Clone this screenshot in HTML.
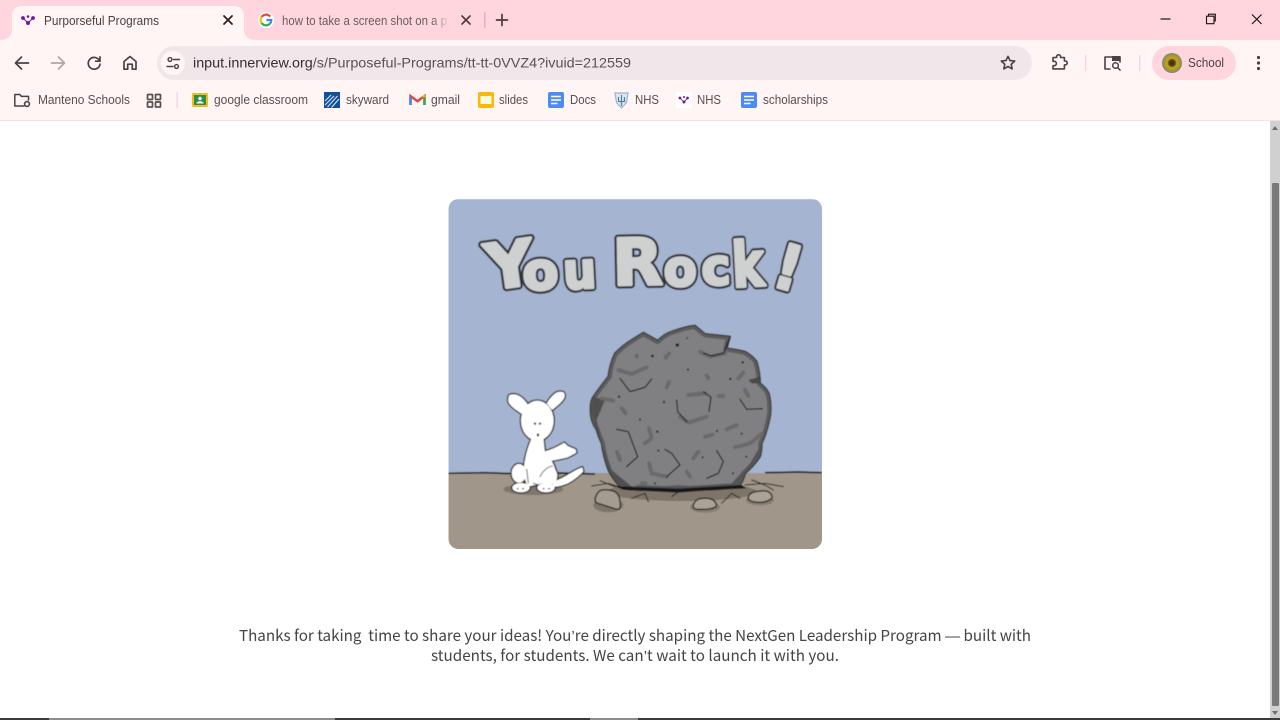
<!DOCTYPE html>
<html lang="en"><head><meta charset="utf-8"><title>Purporseful Programs</title>
<style>
html,body{margin:0;padding:0;width:1280px;height:720px;overflow:hidden;background:#fff}
svg{display:block}
text{font-family:"Liberation Sans",sans-serif;white-space:pre}
.b{font-size:12.5px;fill:#5a4e50}
.ic{fill:none;stroke:#4f3f43;stroke-width:1.7;stroke-linecap:round;stroke-linejoin:round}
.body{font-family:"Noto Sans CJK SC","Liberation Sans",sans-serif;font-size:15.2px;fill:#444}
.body tspan{font-family:"Liberation Sans",sans-serif}
.ttl text{font-family:"DejaVu Sans",sans-serif;font-weight:bold;stroke-linejoin:round}
.t1 text{fill:#2e323a;stroke:#2e323a;stroke-width:7.5}
.t2 text{fill:#cfd1d0;stroke:#cfd1d0;stroke-width:3}
</style></head><body>
<svg width="1280" height="720" viewBox="0 0 1280 720" xmlns="http://www.w3.org/2000/svg" xmlns:xlink="http://www.w3.org/1999/xlink">
<defs>
<clipPath id="card"><rect x="448.5" y="199" width="373.5" height="350" rx="10"/></clipPath>
<linearGradient id="fade" x1="0" x2="1"><stop offset="0" stop-color="#ffd6de" stop-opacity="0"/><stop offset="1" stop-color="#ffd6de"/></linearGradient>
<filter id="soft" x="-5%" y="-5%" width="110%" height="110%"><feGaussianBlur stdDeviation="0.45"/></filter>
<radialGradient id="sun"><stop offset="0" stop-color="#3d2a10"/><stop offset=".3" stop-color="#5a4012"/><stop offset=".48" stop-color="#c9a51c"/><stop offset=".78" stop-color="#a2992a"/><stop offset="1" stop-color="#6f8a8f"/></radialGradient>
<path id="rockp" d="M175 38L218 62Q240 40 260 35Q300 20 330 17L360 42L435 50L425 85Q460 90 480 95Q505 110 515 125Q525 160 525 190Q545 205 552 222Q560 260 555 290Q545 340 530 370Q530 395 525 410Q505 440 480 460Q475 485 460 500Q370 515 280 505Q190 515 110 505Q85 480 70 450Q55 410 50 370Q40 350 35 330Q15 300 17 270Q15 245 25 230Q50 195 70 170Q75 130 90 100Q115 75 140 60Z"/>
<clipPath id="rockc"><use xlink:href="#rockp"/></clipPath>
<g id="dogs">
<path d="M192 256C208 248 225 256 236 268C246 278 250 285 250 290L235 315C215 300 185 285 190 265Z"/>
<path d="M357 248C340 238 322 252 305 280L322 300C340 285 368 265 357 248Z"/>
<ellipse cx="277" cy="332" rx="49" ry="60"/>
<path d="M262 380L295 380L300 430C325 450 335 480 335 510L250 530C228 500 235 440 262 380Z"/>
<path d="M295 425C320 420 340 408 358 398L368 408L392 418L394 428L384 434L368 442C345 448 320 452 300 456Z"/>
<path d="M320 515C355 508 385 480 412 472L415 484C395 505 365 530 325 530Z"/>
<ellipse cx="222" cy="490" rx="22" ry="28"/>
<ellipse cx="310" cy="497" rx="27" ry="28"/>
<ellipse cx="228" cy="533" rx="26" ry="14"/>
<ellipse cx="303" cy="533" rx="26" ry="14"/>
</g>
</defs>

<!-- frame -->
<rect width="1280" height="40" fill="#ffd6de"/>
<rect y="40" width="1280" height="80" fill="#fff5f5"/>
<rect y="120" width="1280" height="1" fill="#f8dde1"/>

<!-- active tab -->
<path d="M0 40 C8 40 12 36 12 30 V16 C12 10 16 6 22 6 H234 C240 6 244 10 244 16 V30 C244 36 248 40 256 40 Z" fill="#fff5f5"/>
<g fill="#6a1b9a"><circle cx="23" cy="18" r="1.9"/><circle cx="33" cy="18" r="1.9"/><circle cx="28" cy="23" r="2"/><circle cx="28" cy="16.5" r="1.3"/></g>
<path d="M23 18L28 23L33 18" fill="none" stroke="#6a1b9a" stroke-width="1"/>
<text x="44" y="25" font-size="12.5" fill="#4a3f42" textLength="115" lengthAdjust="spacingAndGlyphs">Purporseful Programs</text>
<path d="M224 16l8 8M232 16l-8 8" class="ic" style="stroke:#2c2326;stroke-width:1.8"/>

<!-- second tab -->
<circle cx="266" cy="20" r="8" fill="#fff"/>
<g fill="none" stroke-width="2.2">
<path d="M270.2 16.6A5.4 5.4 0 0 0 261.6 17" stroke="#ea4335"/>
<path d="M261.6 17A5.4 5.4 0 0 0 261.6 23" stroke="#fbbc05"/>
<path d="M261.6 23A5.4 5.4 0 0 0 270 23.6" stroke="#34a853"/>
<path d="M270 23.6A5.4 5.4 0 0 0 271.3 20H266.4" stroke="#4285f4"/>
</g>
<text x="282" y="25" font-size="12.5" fill="#6a5d60" textLength="165" lengthAdjust="spacingAndGlyphs">how to take a screen shot on a p</text>
<rect x="432" y="8" width="18" height="24" fill="url(#fade)"/>
<rect x="447" y="8" width="12" height="24" fill="#ffd6de"/>
<path d="M462 16l8 8M470 16l-8 8" class="ic" style="stroke:#4a3a3e;stroke-width:1.6"/>
<rect x="484" y="12" width="1.5" height="16" fill="#f2a9b8"/>
<path d="M502 14.5v11M496.5 20h11" class="ic" style="stroke:#4a3a3e"/>

<!-- window controls -->
<path d="M1160.5 19h10" stroke="#1c1416" stroke-width="1.2"/>
<path d="M1206.5 16.2h7.5v7.5h-7.5z" fill="none" stroke="#1c1416" stroke-width="1.1"/>
<path d="M1208.5 16v-1.800h6.800v6.800h-1.400" fill="none" stroke="#1c1416" stroke-width="1.1"/>
<path d="M1252 14.500l9.500 9.500M1261.500 14.500l-9.500 9.500" stroke="#1c1416" stroke-width="1.2" fill="none"/>

<!-- nav -->
<path d="M28.500 63H16M21.500 57L15.500 63l6 6" class="ic"/>
<path d="M51.500 63H64M58.500 57l6 6-6 6" class="ic" style="stroke:#b3a5a8"/>
<path d="M99.200 60.200A5.900 5.900 0 1 0 100 64.200" class="ic"/><path d="M100 56.800v4.400h-4.400" class="ic"/>
<path d="M124 61.500l6-5 6 5v7.700h-3.700v-5h-4.600v5H124z" class="ic"/>

<!-- omnibox -->
<rect x="157" y="46" width="875" height="34" rx="17" fill="#f1e6e9"/>
<circle cx="173" cy="63" r="12" fill="#fff5f5"/>
<circle cx="170" cy="59.500" r="1.900" class="ic" style="stroke-width:1.4"/><path d="M173.500 59.500h6M167 66.500h6" class="ic" style="stroke-width:1.4"/><circle cx="176.500" cy="66.500" r="1.900" class="ic" style="stroke-width:1.4"/>
<text x="193" y="67.500" font-size="14" fill="#3a2c30" textLength="438" lengthAdjust="spacingAndGlyphs">input.innerview.org<tspan fill="#5e5054">/s/Purposeful-Programs/tt-tt-0VVZ4?ivuid=212559</tspan></text>
<path d="M1008 56.300l2 4.300 4.700.5-3.500 3.200 1 4.600-4.200-2.400-4.200 2.400 1-4.600-3.500-3.200 4.700-.5z" class="ic" style="stroke-width:1.6"/>

<!-- toolbar right -->
<path d="M1053 57.500h3.600v-.8a2 2 0 0 1 4 0v.8h3.800v3.400h.8a2 2 0 0 1 0 4h-.8v4h-11.400v-3.200h1.200a2.100 2.100 0 0 0 0-4.400h-1.200z" class="ic" style="stroke-width:1.6"/>
<rect x="1085" y="55" width="1.400" height="16" fill="#fbd3da"/>
<path d="M1110 69h-5v-12h15v5" class="ic" style="stroke-width:1.6"/><rect x="1112" y="56" width="8.500" height="5" fill="#4f3f43"/>
<circle cx="1115.500" cy="65.500" r="2.800" class="ic" style="stroke-width:1.5"/><path d="M1117.700 67.700l2.400 2.400" class="ic" style="stroke-width:1.5"/>
<rect x="1139" y="55" width="1.400" height="16" fill="#fbd3da"/>
<rect x="1152" y="46" width="84" height="34" rx="17" fill="#ffd6de"/>
<circle cx="1172" cy="63" r="10" fill="url(#sun)"/>
<text x="1188" y="67" font-size="12.500" fill="#4e3f43" textLength="36" lengthAdjust="spacingAndGlyphs">School</text>
<g fill="#4f3f43"><circle cx="1258.500" cy="57.500" r="1.600"/><circle cx="1258.500" cy="63" r="1.600"/><circle cx="1258.500" cy="68.500" r="1.600"/></g>

<!-- bookmarks -->
<path d="M24 106h-9.200v-11.500h5l1.700 1.900h7v3.600" class="ic" style="stroke-width:1.5"/>
<circle cx="27" cy="104" r="2.400" class="ic" style="stroke-width:1.600"/>
<text class="b" x="38" y="104" textLength="92" lengthAdjust="spacingAndGlyphs">Manteno Schools</text>
<g fill="none" stroke="#5a4e50" stroke-width="1.700"><rect x="147.500" y="94.500" width="5" height="5" rx=".6"/><rect x="155.500" y="94.500" width="5" height="5" rx=".6"/><rect x="147.500" y="102" width="5" height="5" rx=".6"/><rect x="155.500" y="102" width="5" height="5" rx=".6"/></g>
<rect x="176.500" y="92" width="1.400" height="16" fill="#fbd3da"/>

<rect x="192" y="93" width="16" height="14" rx="1.200" fill="#f7bb15"/><rect x="194" y="95" width="12" height="10" fill="#2a8e4c"/><circle cx="200" cy="98.500" r="1.700" fill="#fff"/><path d="M196.500 103.500c0-3 7-3 7 0z" fill="#fff"/>
<text class="b" x="214" y="104" textLength="94" lengthAdjust="spacingAndGlyphs">google classroom</text>

<rect x="324" y="92" width="16" height="16" fill="#14509a"/><path d="M325 105l9-9M327.500 107l10-11M331.500 107.500l7.500-8.500M325 101l6-6" stroke="#cfe0f3" stroke-width="1.100" fill="none"/>
<text class="b" x="346" y="104" textLength="43" lengthAdjust="spacingAndGlyphs">skyward</text>

<path d="M410.500 105V96l7 5.200 7-5.200v9" fill="none" stroke="#ea4335" stroke-width="2.400"/><path d="M410.500 97v8" stroke="#4285f4" stroke-width="2.600"/><path d="M424.500 97v8" stroke="#34a853" stroke-width="2.600"/><path d="M423.200 95.500l1.500 1.500" stroke="#fbbc05" stroke-width="2.400"/>
<text class="b" x="431" y="104" textLength="29" lengthAdjust="spacingAndGlyphs">gmail</text>

<rect x="478" y="92" width="16" height="16" rx="2" fill="#fab908"/><rect x="480.500" y="96" width="11" height="8" fill="#fff7e0"/>
<text class="b" x="499" y="104" textLength="29" lengthAdjust="spacingAndGlyphs">slides</text>

<rect x="548" y="92" width="16" height="16" rx="2" fill="#4c8bf5"/><path d="M551 96.500h10M551 100h10M551 103.500h6.500" stroke="#fff" stroke-width="1.500"/>
<text class="b" x="570" y="104" textLength="26" lengthAdjust="spacingAndGlyphs">Docs</text>

<path d="M615 93h13l-1.500 9.500-5 5.500-5-5.500z" fill="#dfe7ee" stroke="#9eb5c9" stroke-width="1.200"/><path d="M621.500 95v11M618.500 97v4.500h6V97" stroke="#4d83ad" stroke-width="1.200" fill="none"/>
<text class="b" x="635" y="104" textLength="24" lengthAdjust="spacingAndGlyphs">NHS</text>

<rect x="676" y="92" width="16" height="16" fill="#fff"/><g fill="#6a1b9a"><circle cx="680" cy="98" r="1.400"/><circle cx="687.500" cy="98" r="1.400"/><circle cx="684" cy="102" r="1.500"/><circle cx="684" cy="97" r="1"/></g><path d="M680 98l4 4 3.500-4" fill="none" stroke="#6a1b9a" stroke-width=".8"/>
<text class="b" x="697" y="104" textLength="24" lengthAdjust="spacingAndGlyphs">NHS</text>

<rect x="741" y="92" width="16" height="16" rx="2" fill="#4c8bf5"/><path d="M744 96.500h10M744 100h10M744 103.500h6.500" stroke="#fff" stroke-width="1.500"/>
<text class="b" x="763" y="104" textLength="65" lengthAdjust="spacingAndGlyphs">scholarships</text>

<!-- card image -->
<g clip-path="url(#card)">
<g filter="url(#soft)">
<rect x="448" y="199" width="375" height="351" fill="#a5b4d0"/>
<rect x="448" y="473" width="375" height="77" fill="#a09689"/>

<!-- title -->
<g class="ttl t1">
<text transform="translate(489 290) rotate(-8)" font-size="63" textLength="48" lengthAdjust="spacingAndGlyphs">Y</text>
<text transform="translate(523 290) rotate(-2)" font-size="52" textLength="36" lengthAdjust="spacingAndGlyphs">o</text>
<text transform="translate(564 289) rotate(-3)" font-size="50" textLength="33" lengthAdjust="spacingAndGlyphs">u</text>
<text transform="translate(613 285) rotate(-1)" font-size="64" textLength="50" lengthAdjust="spacingAndGlyphs">R</text>
<text transform="translate(664 286) rotate(-1)" font-size="50" textLength="33" lengthAdjust="spacingAndGlyphs">o</text>
<text transform="translate(702 285) rotate(-2)" font-size="50" textLength="29" lengthAdjust="spacingAndGlyphs">c</text>
<text transform="translate(733 287) rotate(-3)" font-size="62" textLength="32" lengthAdjust="spacingAndGlyphs">k</text>
<text transform="translate(770 285) rotate(16)" font-size="62" textLength="26" lengthAdjust="spacingAndGlyphs">!</text>
</g>
<g class="ttl t2">
<text transform="translate(489 290) rotate(-8)" font-size="63" textLength="48" lengthAdjust="spacingAndGlyphs">Y</text>
<text transform="translate(523 290) rotate(-2)" font-size="52" textLength="36" lengthAdjust="spacingAndGlyphs">o</text>
<text transform="translate(564 289) rotate(-3)" font-size="50" textLength="33" lengthAdjust="spacingAndGlyphs">u</text>
<text transform="translate(613 285) rotate(-1)" font-size="64" textLength="50" lengthAdjust="spacingAndGlyphs">R</text>
<text transform="translate(664 286) rotate(-1)" font-size="50" textLength="33" lengthAdjust="spacingAndGlyphs">o</text>
<text transform="translate(702 285) rotate(-2)" font-size="50" textLength="29" lengthAdjust="spacingAndGlyphs">c</text>
<text transform="translate(733 287) rotate(-3)" font-size="62" textLength="32" lengthAdjust="spacingAndGlyphs">k</text>
<text transform="translate(770 285) rotate(16)" font-size="62" textLength="26" lengthAdjust="spacingAndGlyphs">!</text>
</g>

<g transform="translate(445 310) scale(.33333)">
<!-- shadows -->
<ellipse cx="265" cy="538" rx="90" ry="17" fill="#7f776d"/>
<ellipse cx="710" cy="545" rx="225" ry="28" fill="#7d7569"/>
<ellipse cx="490" cy="585" rx="45" ry="22" fill="#7d7569"/>
<ellipse cx="780" cy="592" rx="45" ry="16" fill="#857d71"/>
<ellipse cx="945" cy="570" rx="42" ry="16" fill="#857d71"/>
<!-- ground line -->
<path d="M10 490L120 488L200 491L340 489L450 492M960 488L1060 486L1130 488" fill="none" stroke="#1c1f26" stroke-width="5"/>
<!-- rock -->
<g transform="translate(420 30)">
<use xlink:href="#rockp" fill="#808082" stroke="#242424" stroke-width="6" stroke-linejoin="round"/>
<g clip-path="url(#rockc)">
<use xlink:href="#rockp" fill="none" stroke="#5c5c5c" stroke-width="20" stroke-linejoin="round"/>
<path d="M17 270L25 230L60 240L35 300L50 370L80 450L140 500L110 510L70 450L50 370L35 330Z" fill="#4f4f4f"/>
<path d="M460 505L480 460L525 410L530 370L495 430L440 490L280 500L150 495L170 510L280 510Z" fill="#555"/>
<path d="M490 180L525 170L525 190L500 190Z" fill="#484848"/>
</g>
</g>
<!-- darker patches -->
<g fill="none" stroke="#6b6b6b" stroke-width="12" stroke-linecap="round" stroke-linejoin="round">
<path d="M520 180L560 192L605 172"/><path d="M662 143L672 130"/><path d="M665 232L672 216"/><path d="M730 255L780 250"/><path d="M822 258H835"/><path d="M880 205L895 188"/><path d="M900 240L910 258"/><path d="M530 295L542 310"/><path d="M705 320L730 338L785 320"/><path d="M780 380L802 374"/><path d="M845 358L875 345"/><path d="M870 412L915 400L950 372"/><path d="M600 400L620 385L612 355"/><path d="M516 425L525 450"/><path d="M612 460L620 490L665 500"/><path d="M745 445L760 425"/><path d="M725 485L735 500"/><path d="M590 520H602"/><path d="M765 125L795 140L840 130"/><path d="M785 197L790 205"/><path d="M575 137V140"/><path d="M470 265L505 272"/>
</g>
<!-- cracks -->
<g fill="none" stroke="#1d1d1d" stroke-width="3.500" stroke-linecap="round" stroke-linejoin="round">
<path d="M525 205L555 245L600 232L620 207"/><path d="M775 130L800 138L835 130L855 82"/><path d="M695 270L698 305L725 335"/><path d="M775 245L798 262L792 305"/><path d="M885 268L905 298L952 296"/><path d="M515 358L550 365L578 440L545 470"/><path d="M660 418L680 430L705 465L665 500"/><path d="M815 422L835 455L820 490L785 505"/>
</g>
<g fill="#1d1d1d"><circle cx="622" cy="138" r="4"/><circle cx="697" cy="105" r="5"/><circle cx="727" cy="84" r="2.500"/><circle cx="893" cy="157" r="3.500"/><circle cx="729" cy="179" r="3"/><circle cx="856" cy="207" r="3.500"/><circle cx="522" cy="260" r="3.500"/><circle cx="657" cy="276" r="3.500"/><circle cx="637" cy="365" r="3.500"/><circle cx="816" cy="363" r="3"/><circle cx="890" cy="371" r="3"/><circle cx="904" cy="440" r="3"/><circle cx="773" cy="442" r="3"/><circle cx="864" cy="490" r="3"/><circle cx="630" cy="520" r="3"/><circle cx="640" cy="422" r="3"/><circle cx="585" cy="328" r="3"/></g>
<!-- ground cracks -->
<path d="M505 528L540 540L700 548L800 540L905 535L890 525L700 536L540 530Z" fill="#191919"/>
<g fill="none" stroke="#1c1c1c" stroke-width="3" stroke-linecap="round">
<path d="M440 528L490 520L520 530M465 512L510 530M560 565L600 550L610 575M830 580L860 550L885 565M900 525L960 520L1015 530M920 510L960 525L985 540M700 545L680 560"/>
</g>
<!-- small rocks -->
<path d="M450 568Q455 545 470 540Q495 538 510 545Q525 555 525 575Q530 600 515 598Q490 590 465 582Q450 580 450 568Z" fill="#a59c8f" stroke="#222" stroke-width="4" stroke-linejoin="round"/>
<path d="M745 585Q750 570 765 566Q790 562 805 570Q820 585 810 592Q790 600 755 598Q742 595 745 585Z" fill="#aca397" stroke="#222" stroke-width="4" stroke-linejoin="round"/>
<path d="M910 560Q915 548 930 545Q960 540 970 545Q985 555 980 565Q965 578 940 577Q905 575 910 560Z" fill="#aca397" stroke="#222" stroke-width="4" stroke-linejoin="round"/>
<!-- dog -->
<use xlink:href="#dogs" fill="#23262c" stroke="#23262c" stroke-width="8" stroke-linejoin="round"/>
<use xlink:href="#dogs" fill="#fff"/>
<g fill="#1b1b1b"><circle cx="270" cy="341" r="3.500"/><circle cx="285" cy="341" r="3.500"/><ellipse cx="279" cy="375" rx="3.500" ry="4.500"/><circle cx="218" cy="536" r="2.500"/><circle cx="234" cy="536" r="2.500"/><circle cx="296" cy="536" r="2.500"/><circle cx="312" cy="536" r="2.500"/></g>
<path d="M245 478L250 518M265 520L280 525M285 500C295 480 310 470 322 468" fill="none" stroke="#23262c" stroke-width="2.500" stroke-linecap="round"/>
</g>
</g>
</g>

<!-- body text -->
<text class="body" x="239" y="641" textLength="792" lengthAdjust="spacing">Thanks for taking  time to share your ideas! You<tspan>’</tspan>re directly shaping the NextGen Leadership Program <tspan>—</tspan> built with</text>
<text class="body" x="431" y="661" textLength="408" lengthAdjust="spacing">students, for students. We can<tspan>’</tspan>t wait to launch it with you.</text>

<!-- scrollbar -->
<rect x="1270" y="121" width="10" height="597" fill="#d0d0d0"/>
<path d="M1272 130l3-4 3 4z" fill="#6d6d6d"/>
<rect x="1272" y="183" width="7" height="523" rx="1" fill="#7a7a7a"/>
<path d="M1272 711l3 4 3-4z" fill="#6d6d6d"/>

<!-- bottom edge -->
<rect y="718" width="1280" height="2" fill="#3b3b3b"/>
<rect x="49" y="718" width="286" height="2" fill="#8d8d8d"/>
<rect x="590" y="718" width="48" height="2" fill="#8d8d8d"/>
</svg>
</body></html>
